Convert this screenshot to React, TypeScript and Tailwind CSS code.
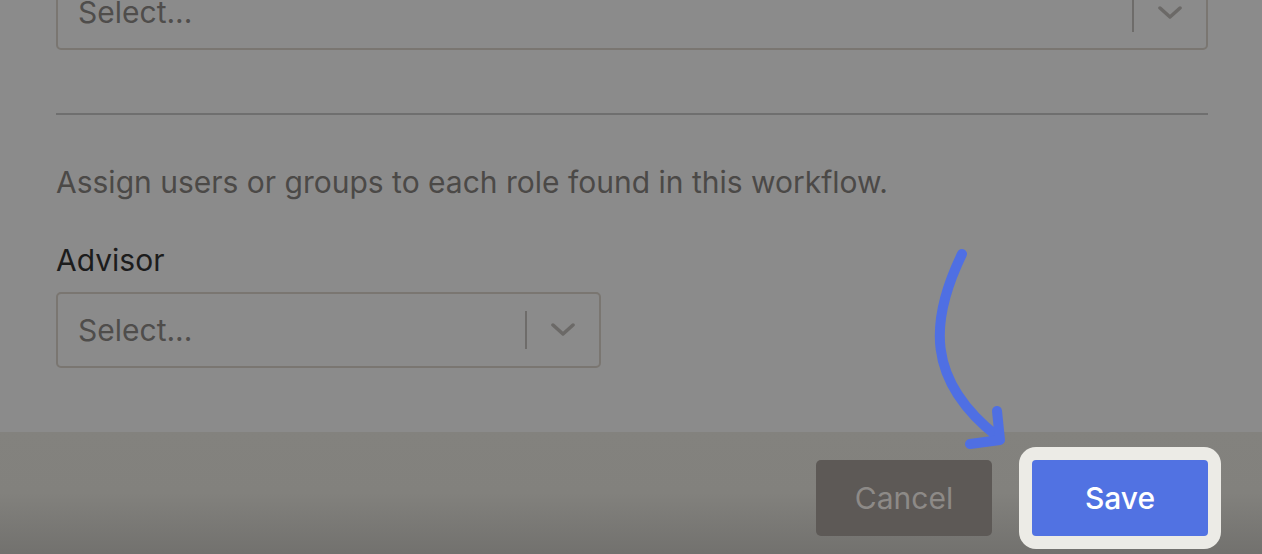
import React from "react";

const font = { fontFamily: "Inter, 'Noto Sans', sans-serif" };

const Chevron = () => (
  <svg width="24" height="14" viewBox="0 0 24 14" fill="none">
    <polyline points="2,2 12,11 22,2" stroke="#6b6967" strokeWidth="3.5" strokeLinecap="round" strokeLinejoin="round" />
  </svg>
);

type SelectProps = { className?: string };

const SelectBox: React.FC<SelectProps> = ({ className }) => (
  <div className={`flex h-[75px] items-center rounded-[5px] border-2 border-[#7a7671] ${className ?? ""}`}>
    <span className="flex-1 pl-[20px] text-[30px] text-[#4f4d4b]">Select...</span>
    <div className="h-[38px] w-[2px] bg-[#6e6c6a]" />
    <div className="flex w-[72px] items-center justify-center">
      <Chevron />
    </div>
  </div>
);

export default function App() {
  return (
    <div className="relative flex h-[554px] w-[1262px] flex-col overflow-hidden bg-[#8b8b8b]" style={font}>
      <div className="flex flex-col pl-[56px] pr-[54px]">
        <SelectBox className="-mt-[25px]" />
        <div className="mt-[63px] h-[2px] bg-[#6f6f6f]" />
        <p className="mt-[47px] text-[30px] leading-[40px] text-[#4b4947]">
          Assign users or groups to each role found in this workflow.
        </p>
        <label className="mt-[38px] text-[30px] leading-[40px] text-[#1c1c1c]">Advisor</label>
        <SelectBox className="mt-[12px] h-[76px] w-[545px]" />
      </div>

      <div className="mt-auto flex h-[122px] items-center justify-end gap-[27px] bg-gradient-to-b from-[#83827e] via-[#82817d] to-[#72716e] pr-[41px] pt-[10px]">
        <button className="h-[76px] w-[176px] rounded-[5px] bg-[#5d5956] text-[30px] text-[#8d8a87]">Cancel</button>
        <div className="rounded-[17px] bg-[#ecebe6] p-[13px]">
          <button className="h-[76px] w-[176px] rounded-[4px] bg-[#5172e2] text-[30px] font-medium text-white">Save</button>
        </div>
      </div>

      <svg className="absolute left-0 top-0" width="1262" height="554" viewBox="0 0 1262 554" fill="none">
        <path
          d="M962 254 C 930 320, 925 380, 998 437"
          stroke="#4f6fe3"
          strokeWidth="10"
          strokeLinecap="round"
        />
        <path
          d="M997 411 L 1000 440 L 970 444"
          stroke="#4f6fe3"
          strokeWidth="10"
          strokeLinecap="round"
          strokeLinejoin="round"
        />
      </svg>
    </div>
  );
}
